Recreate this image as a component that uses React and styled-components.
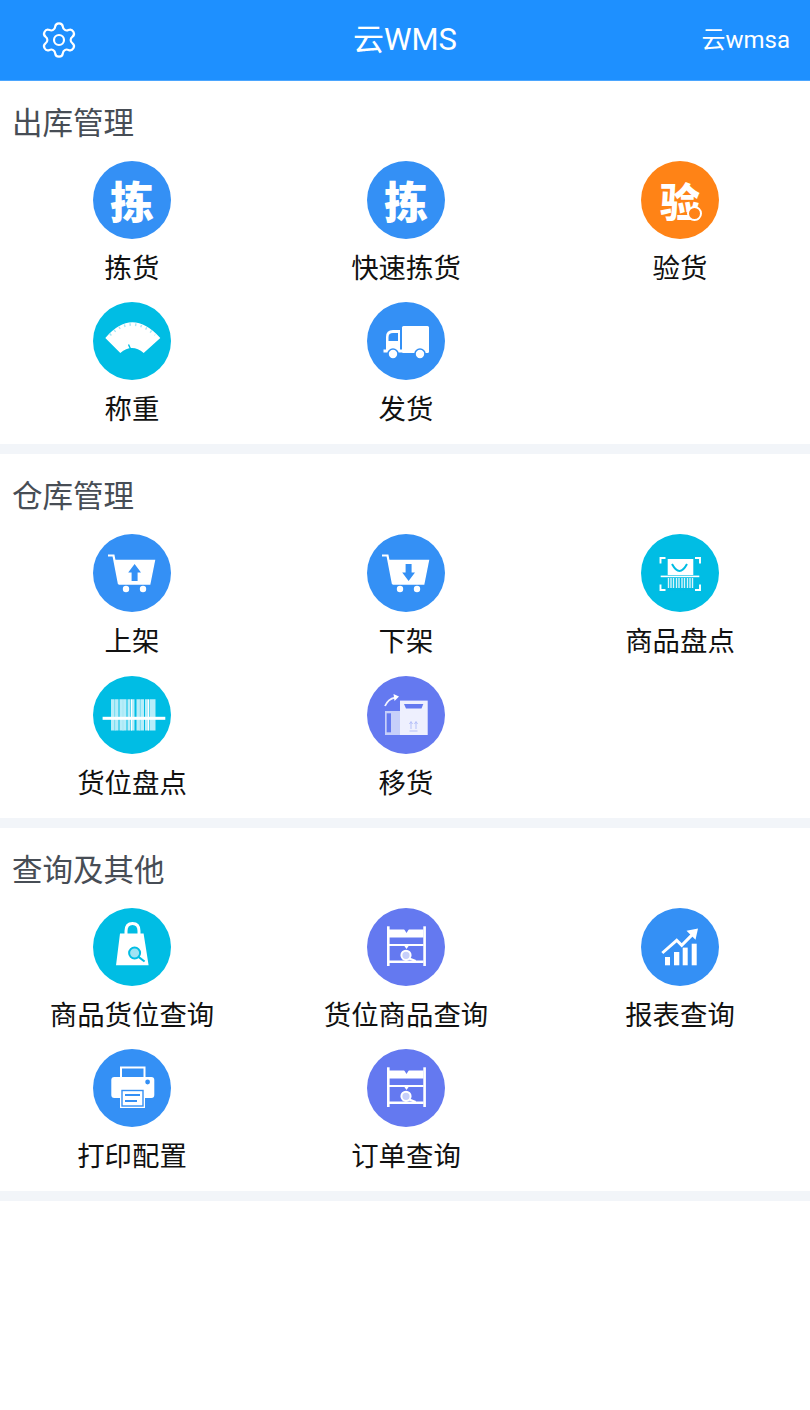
import React from 'react'
import styled, { createGlobalStyle } from 'styled-components'
import { Settings } from 'lucide-react'

const FONT = `Roboto, "Noto Sans CJK SC", sans-serif`
const BLUE = '#3490f5'
const ORANGE = '#ff8316'
const CYAN = '#00bde4'
const INDIGO = '#6479f0'

const GlobalStyle = createGlobalStyle`
  html, body { margin: 0; padding: 0; background: #fff; }
  body { font-family: ${FONT}; overflow-x: hidden; }
`

const Page = styled.div`
  width: 810px;
  min-height: 1410px;
  overflow: hidden;
  background: #fff;
`

const Header = styled.header`
  height: 80px;
  display: grid;
  grid-template-columns: 1fr auto 1fr;
  align-items: center;
  background: #1e90ff;
  border-bottom: 1px solid #4ba6ff;
  color: #fff;
`

const GearButton = styled.div`
  display: flex;
  padding-left: 39px;
  color: #fff;
`

const HeaderTitle = styled.div`
  font-size: 31px;
  line-height: 80px;
`

const UserName = styled.div`
  justify-self: end;
  padding-right: 20px;
  font-size: 24px;
  line-height: 80px;
`

const Section = styled.section`
  height: 363.4px;
  border-bottom: 10px solid #f2f5f9;
`

const SectionTitle = styled.h2`
  margin: 0;
  padding: 15px 0 9px 12px;
  font-size: 30.5px;
  font-weight: 400;
  line-height: 56px;
  color: #474d55;
`

const Grid = styled.div`
  display: grid;
  grid-template-columns: repeat(3, 274px);
  row-gap: 5.4px;
  margin-left: -5px;
`

const Cell = styled.div`
  display: flex;
  flex-direction: column;
  align-items: center;
`

const Badge = styled.div`
  width: 78px;
  height: 78px;
  border-radius: 50%;
  background: ${p => p.$color};
  display: flex;
  align-items: center;
  justify-content: center;
  color: #fff;
  position: relative;
  overflow: hidden;
`

const BadgeChar = styled.span`
  font-family: "Noto Sans CJK SC", sans-serif;
  font-size: ${p => p.$size}px;
  font-weight: 900;
  line-height: 78px;
`

const Ring = styled.i`
  position: absolute;
  left: 46px;
  top: 45px;
  width: 15px;
  height: 15px;
  border: 2.4px solid #fff;
  border-radius: 50%;
  background: ${ORANGE};
  box-sizing: border-box;
`

const Label = styled.div`
  padding-top: 2px;
  font-size: 27.4px;
  line-height: 56px;
  color: #111;
  white-space: nowrap;
`

const Icon = ({ children }) => (
  <svg width="78" height="78" viewBox="0 0 78 78">{children}</svg>
)

const ScaleIcon = () => (
  <Icon>
    <path d="M12.3 36 Q39 4.6 67.3 36 L50.7 51 Q39 41 27.3 51 Z" fill="#fff" />
    <path d="M17 33 Q39 12 62 33" fill="none" stroke="#a9e5f5" strokeWidth="2.6" strokeDasharray="1.4 4.2" />
    <path d="M35.5 42.5 L38.5 49" stroke={CYAN} strokeWidth="1.4" />
  </Icon>
)

const TruckIcon = () => (
  <Icon>
    <rect x="35" y="24" width="27" height="27" rx="1.5" fill="#fff" />
    <path d="M19 50 V35 Q19 28 26 28 H33 V50 Z" fill="#fff" />
    <path d="M21.5 39 V35 Q21.5 31 26 31 H31 V39 Z" fill={BLUE} />
    <rect x="16.5" y="47.5" width="20" height="3" fill="#fff" />
    <circle cx="26" cy="52" r="5" fill="#fff" stroke={BLUE} strokeWidth="1.6" />
    <circle cx="53" cy="52" r="5" fill="#fff" stroke={BLUE} strokeWidth="1.6" />
  </Icon>
)

const CartIcon = ({ up }) => (
  <Icon>
    <path d="M15 21.5 H20.5 L26 50" fill="none" stroke="#fff" strokeWidth="2.2" />
    <path d="M21.6 25.7 H62.3 L57.3 50.7 H25.6 Z" fill="#fff" />
    <circle cx="33" cy="55" r="3.2" fill="#fff" />
    <circle cx="50" cy="55" r="3.2" fill="#fff" />
    {up
      ? <path d="M41.6 30 L48 38.5 H44.6 V47 H38.6 V38.5 H35.2 Z" fill={BLUE} />
      : <path d="M41.6 47 L48 38.5 H44.6 V30 H38.6 V38.5 H35.2 Z" fill={BLUE} />}
  </Icon>
)

const ScanIcon = () => (
  <Icon>
    <path d="M24.5 24 H19.5 V29.5 M54 24 H59 V29.5 M19.5 50.5 V56 H24.5 M59 50.5 V56 H54" fill="none" stroke="#fff" strokeWidth="1.9" />
    <path d="M26.7 25 H52.3 V41 H26.7 Z" fill="#fff" />
    <path d="M31 30 Q38.5 44 46 30" fill="none" stroke={CYAN} strokeWidth="2" />
    <rect x="19.7" y="41.6" width="38.6" height="1.6" fill="#fff" />
    <path d="M27.5 44 V54 M30 44 V54 M32.5 44 V54 M35.5 44 V54 M38 44 V54 M41 44 V54 M43.5 44 V54 M46.5 44 V54 M49 44 V54 M51.5 44 V54" stroke="#fff" strokeWidth="1.4" opacity="0.85" />
  </Icon>
)

const BarcodeIcon = () => (
  <Icon>
    <path d="M19.5 23.3 V54.6 M24 23.3 V54.6 M28 23.3 V54.6 M32 23.3 V54.6 M36 23.3 V54.6 M40 23.3 V54.6 M45 23.3 V54.6 M49.5 23.3 V54.6 M53.5 23.3 V54.6 M58 23.3 V54.6 M61 23.3 V54.6" stroke="#b8edf9" strokeWidth="3" />
    <path d="M22 23.3 V54.6 M30 23.3 V54.6 M38.5 23.3 V54.6 M47 23.3 V54.6 M55.5 23.3 V54.6" stroke="#fff" strokeWidth="1" />
    <rect x="9.6" y="40.8" width="62.7" height="3" fill="#fff" />
  </Icon>
)

const MoveIcon = () => (
  <Icon>
    <path d="M18 30 Q21 23 28 21.6" fill="none" stroke="#fff" strokeWidth="1.8" opacity="0.9" />
    <path d="M32 20.5 L26.5 18 L27.5 25 Z" fill="#fff" />
    <rect x="18" y="35" width="15" height="24" fill="#c6cffa" />
    <rect x="19.7" y="37.3" width="4.3" height="19" fill={INDIGO} />
    <rect x="33" y="24.6" width="27.7" height="34.4" fill="#eef0fe" />
    <path d="M37 28 H56.3 L54.5 32.5 H39 Z" fill={INDIGO} />
    <path d="M44 53 V46 M42.5 48 L44 45.5 L45.5 48 M49 53 V46 M47.5 48 L49 45.5 L50.5 48 M42.5 55 H50.5" fill="none" stroke="#b4bff8" strokeWidth="1" />
  </Icon>
)

const Magnifier = ({ cx, cy, r, color, fill, ex, ey }) => (
  <>
    <circle cx={cx} cy={cy} r={r} fill={fill} stroke={color} strokeWidth="2" />
    <path d={`M${cx + r * 0.7} ${cy + r * 0.7} L${ex} ${ey}`} stroke={color} strokeWidth="2" />
  </>
)

const BagIcon = () => (
  <Icon>
    <path d="M33 28 V23 Q33 15.5 39.5 15.5 Q46 15.5 46 23 V28" fill="none" stroke="#fff" strokeWidth="3" />
    <path d="M27 25.6 H50.6 L55.6 57.3 H23 Z" fill="#fff" />
    <Magnifier cx={41.6} cy={45} r={5.5} color={CYAN} fill="#9fe3f4" ex={51.6} ey={53.5} />
  </Icon>
)

const ShelfIcon = () => (
  <Icon>
    <rect x="20" y="18.3" width="2.6" height="39.7" fill="#fff" />
    <rect x="56.3" y="18.3" width="2.6" height="39.7" fill="#fff" />
    <path d="M22 21.5 H56.5 V29.5 H22 Z" fill="#fff" />
    <path d="M37 21 L39.5 25 L42 21 Z" fill={INDIGO} />
    <path d="M22 36 H56.5 V38 H22 Z" fill="#fff" />
    <path d="M37 37.5 L39.5 41 L42 37.5 Z" fill="#fff" />
    <rect x="22" y="52.5" width="34.5" height="2.5" fill="#fff" />
    <Magnifier cx={39} cy={47.3} r={4.6} color="#fff" fill="#c6cffa" ex={48.7} ey={53} />
  </Icon>
)

const ChartIcon = () => (
  <Icon>
    <rect x="24" y="49" width="5" height="8.3" fill="#fff" />
    <rect x="33" y="44" width="5.3" height="13.3" fill="#fff" />
    <rect x="41.7" y="39.6" width="5" height="17.7" fill="#fff" />
    <rect x="50.7" y="35.7" width="5" height="21.6" fill="#fff" />
    <path d="M21.3 45 L35.7 32.3 L40.7 37.3 L52.3 25.6" fill="none" stroke="#fff" strokeWidth="3" />
    <path d="M57 20.4 L45.5 22.8 L54.5 31.8 Z" fill="#fff" />
  </Icon>
)

const PrinterIcon = () => (
  <Icon>
    <path d="M28 28 V18.5 H51.5 V28" fill="none" stroke="#fff" strokeWidth="2" />
    <rect x="18.3" y="28" width="43" height="21" rx="3" fill="#fff" />
    <circle cx="54.6" cy="33" r="2.4" fill={BLUE} />
    <rect x="27" y="39.5" width="25" height="19.5" fill="#fff" />
    <rect x="29" y="41.5" width="21" height="15.5" fill="none" stroke={BLUE} strokeWidth="1.4" />
    <path d="M32 46 H47 M32 52 H44" stroke={BLUE} strokeWidth="1.8" />
  </Icon>
)

const sections = [
  {
    title: '出库管理',
    items: [
      { label: '拣货', color: BLUE, char: '拣' },
      { label: '快速拣货', color: BLUE, char: '拣' },
      { label: '验货', color: ORANGE, char: '验', ring: true },
      { label: '称重', color: CYAN, icon: <ScaleIcon /> },
      { label: '发货', color: BLUE, icon: <TruckIcon /> },
    ],
  },
  {
    title: '仓库管理',
    items: [
      { label: '上架', color: BLUE, icon: <CartIcon up /> },
      { label: '下架', color: BLUE, icon: <CartIcon /> },
      { label: '商品盘点', color: CYAN, icon: <ScanIcon /> },
      { label: '货位盘点', color: CYAN, icon: <BarcodeIcon /> },
      { label: '移货', color: INDIGO, icon: <MoveIcon /> },
    ],
  },
  {
    title: '查询及其他',
    items: [
      { label: '商品货位查询', color: CYAN, icon: <BagIcon /> },
      { label: '货位商品查询', color: INDIGO, icon: <ShelfIcon /> },
      { label: '报表查询', color: BLUE, icon: <ChartIcon /> },
      { label: '打印配置', color: BLUE, icon: <PrinterIcon /> },
      { label: '订单查询', color: INDIGO, icon: <ShelfIcon /> },
    ],
  },
]

const App = () => (
  <Page>
    <GlobalStyle />
    <Header>
      <GearButton><Settings size={40} strokeWidth={1.3} /></GearButton>
      <HeaderTitle>云WMS</HeaderTitle>
      <UserName>云wmsa</UserName>
    </Header>
    {sections.map(section => (
      <Section key={section.title}>
        <SectionTitle>{section.title}</SectionTitle>
        <Grid>
          {section.items.map(item => (
            <Cell key={item.label}>
              <Badge $color={item.color}>
                {item.char && <BadgeChar $size={item.ring ? 40 : 44}>{item.char}</BadgeChar>}
                {item.ring && <Ring />}
                {item.icon}
              </Badge>
              <Label>{item.label}</Label>
            </Cell>
          ))}
        </Grid>
      </Section>
    ))}
  </Page>
)

export default App
